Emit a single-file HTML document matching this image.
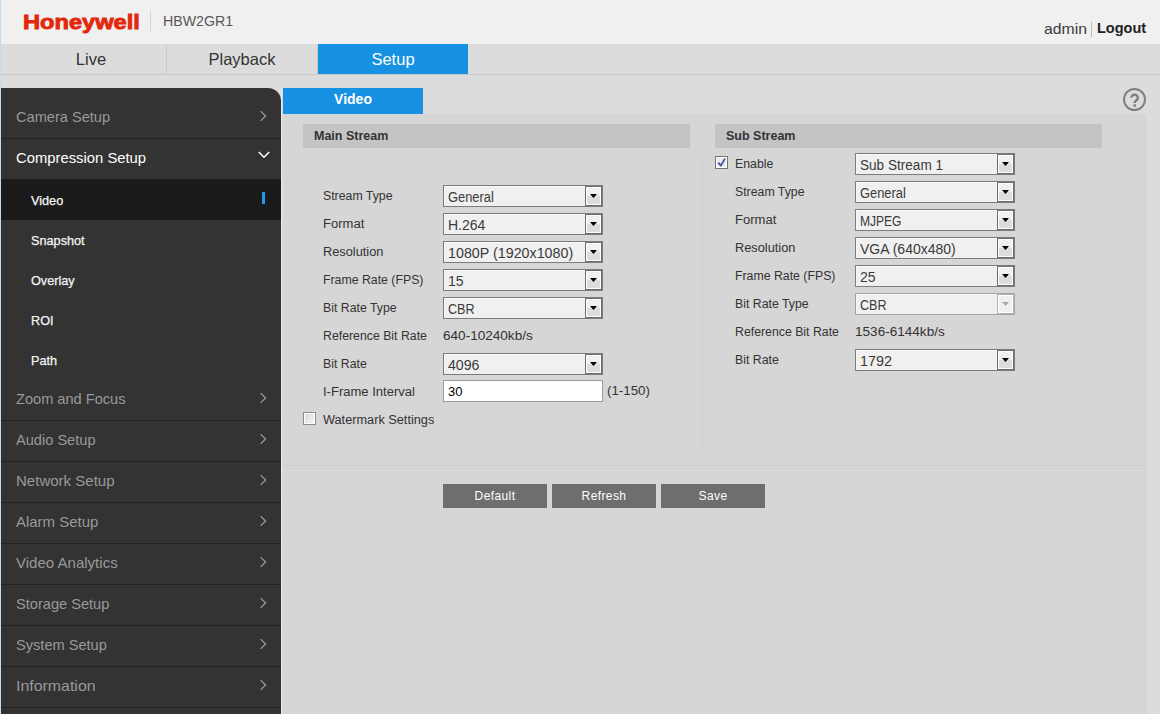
<!DOCTYPE html>
<html><head><meta charset="utf-8">
<style>
*{margin:0;padding:0;box-sizing:border-box}
html,body{width:1160px;height:714px;overflow:hidden;background:#dcdcdc;font-family:"Liberation Sans",sans-serif;position:relative}
.a{position:absolute;white-space:nowrap}
#lb{left:0;top:0;width:1px;height:714px;background:#c2dbf5}
#hdr{left:1px;top:0;width:1159px;height:44px;background:#f0f0f0}
#logo{left:22.5px;top:9.6px;font-size:21px;font-weight:700;color:#e2280c;transform:scaleX(1.125);transform-origin:0 0;-webkit-text-stroke:0.9px #e4280e}
#hsep{left:150px;top:11px;width:1px;height:20px;background:#d4d4d4}
#model{left:163px;top:13px;font-size:14.2px;color:#585858}
#admin{left:1044px;top:19.5px;font-size:15px;color:#3a3a3a;transform:scaleX(1.05);transform-origin:0 0}
#usep{left:1091px;top:22px;width:1px;height:15px;background:#bbb}
#logout{left:1097px;top:19.5px;font-size:14.5px;font-weight:700;color:#222}
#nav{left:1px;top:44px;width:1159px;height:31px;background:#dcdcdc;border-bottom:1px solid #c9c9c9}
.tab{top:44px;height:30px;width:150px;text-align:center;font-size:16.5px;line-height:30px;color:#333}
.tsep{top:44px;width:1px;height:30px;background:#cbcbcb}
#side{left:1px;top:88px;width:280px;height:626px;background:#333;border-top-right-radius:13px;overflow:hidden}
.mi{left:0;width:280px;height:41px;border-bottom:1px solid #222;font-size:14.6px;color:#999;padding-left:15px;line-height:38.5px}
.mi.open{color:#fff;border-bottom:none}
.si{left:0;width:280px;height:40px;font-size:12.7px;font-weight:400;color:#f4f4f4;-webkit-text-stroke:0.25px #f4f4f4;padding-left:30px;line-height:42.5px}
.chev{position:absolute;right:12px;top:12px;width:12px;height:12px}
.open .chev{top:10px;right:11.5px}
#content{left:283px;top:114px;width:863px;height:600px;background:#d6d6d6;border-right:1px solid #d1d1d1}
#vtab{left:283px;top:88px;width:140px;height:26px;background:#1791e2;color:#fff;font-size:14px;font-weight:700;text-align:center;line-height:22px}
.bar{top:124px;height:24px;width:387px;background:#c4c4c4;font-size:12.5px;font-weight:700;color:#333;padding-left:11px;line-height:24px}
.lbl{font-size:12.3px;color:#333}
.sel{position:absolute;width:160px;height:22px;border:1px solid #7d7d7d;background:#f0f0f0;box-shadow:inset 1px 1px 0 #f8f8f8}
.sel span{position:absolute;left:4px;transform-origin:0 0;top:2px;font-size:14px;color:#3a3a3a;line-height:18px;white-space:nowrap}
.sel i{position:absolute;right:0;top:0;width:17px;height:20px;border:1px solid #6c6c6c;background:linear-gradient(#f0f0f0 50%,#dcdcdc 50%);box-shadow:inset 0 0 0 1px #fff}
.sel i svg{position:absolute;left:4px;top:7px}
.sel.dis{border-color:#a3a3a3}
.sel.dis i{border-color:#b5b5b5;background:#f0f0f0}
.btn{top:484px;width:104px;height:24px;background:#6e6e6e;color:#fff;font-size:12px;letter-spacing:0.4px;text-align:center;line-height:24px}
.val{font-size:13.3px;color:#333}
.inp{width:160px;height:22px;border:1px solid #9c9c9c;background:#fff}
.inp span{position:absolute;left:4px;top:3px;font-size:13px;color:#000}
.cb{position:absolute;width:13px;height:13px;border:1px solid #747474;background:#ececec;box-shadow:inset 0 0 0 1px #fff}
</style></head><body>
<div class="a" id="lb"></div>
<div class="a" id="hdr"></div>
<div class="a" id="logo">Honeywell</div>
<div class="a" id="hsep"></div>
<div class="a" id="model">HBW2GR1</div>
<div class="a" id="admin">admin</div>
<div class="a" id="usep"></div>
<div class="a" id="logout">Logout</div>

<div class="a" id="nav"></div>
<div class="a tab" style="left:16px">Live</div>
<div class="a tsep" style="left:166px"></div>
<div class="a tab" style="left:167px">Playback</div>
<div class="a tsep" style="left:317px"></div>
<div class="a tab" style="left:318px;background:#1791e2;color:#fff;height:30px">Setup</div>

<div class="a" id="side">
 <div class="a mi" style="top:10px">Camera Setup<svg class="chev" viewBox="0 0 12 12"><path d="M3.6 1.1 L8.6 6 L3.6 10.9" fill="none" stroke="#999" stroke-width="1.3"/></svg></div>
 <div class="a mi open" style="top:51px"><span style="display:inline-block;transform:scaleX(1.015);transform-origin:0 0">Compression Setup</span><svg class="chev" viewBox="0 0 12 12"><path d="M0.8 3 L6 8.2 L11.2 3" fill="none" stroke="#fff" stroke-width="1.5"/></svg></div>
 <div class="a si" style="top:91px;height:41px;background:#1b1b1b;line-height:44px">Video<div style="position:absolute;left:261px;top:13px;width:3px;height:12px;background:#1e9af0"></div></div>
 <div class="a si" style="top:132px">Snapshot</div>
 <div class="a si" style="top:172px">Overlay</div>
 <div class="a si" style="top:212px">ROI</div>
 <div class="a si" style="top:252px">Path</div>
 <div class="a mi" style="top:292px">Zoom and Focus<svg class="chev" viewBox="0 0 12 12"><path d="M3.6 1.1 L8.6 6 L3.6 10.9" fill="none" stroke="#999" stroke-width="1.3"/></svg></div>
 <div class="a mi" style="top:333px">Audio Setup<svg class="chev" viewBox="0 0 12 12"><path d="M3.6 1.1 L8.6 6 L3.6 10.9" fill="none" stroke="#999" stroke-width="1.3"/></svg></div>
 <div class="a mi" style="top:374px"><span style="display:inline-block;transform:scaleX(1.03);transform-origin:0 0">Network Setup</span><svg class="chev" viewBox="0 0 12 12"><path d="M3.6 1.1 L8.6 6 L3.6 10.9" fill="none" stroke="#999" stroke-width="1.3"/></svg></div>
 <div class="a mi" style="top:415px"><span style="display:inline-block;transform:scaleX(1.025);transform-origin:0 0">Alarm Setup</span><svg class="chev" viewBox="0 0 12 12"><path d="M3.6 1.1 L8.6 6 L3.6 10.9" fill="none" stroke="#999" stroke-width="1.3"/></svg></div>
 <div class="a mi" style="top:456px"><span style="display:inline-block;transform:scaleX(1.03);transform-origin:0 0">Video Analytics</span><svg class="chev" viewBox="0 0 12 12"><path d="M3.6 1.1 L8.6 6 L3.6 10.9" fill="none" stroke="#999" stroke-width="1.3"/></svg></div>
 <div class="a mi" style="top:497px">Storage Setup<svg class="chev" viewBox="0 0 12 12"><path d="M3.6 1.1 L8.6 6 L3.6 10.9" fill="none" stroke="#999" stroke-width="1.3"/></svg></div>
 <div class="a mi" style="top:538px">System Setup<svg class="chev" viewBox="0 0 12 12"><path d="M3.6 1.1 L8.6 6 L3.6 10.9" fill="none" stroke="#999" stroke-width="1.3"/></svg></div>
 <div class="a mi" style="top:579px"><span style="display:inline-block;transform:scaleX(1.09);transform-origin:0 0">Information</span><svg class="chev" viewBox="0 0 12 12"><path d="M3.6 1.1 L8.6 6 L3.6 10.9" fill="none" stroke="#999" stroke-width="1.3"/></svg></div>
</div>
<div class="a" style="left:281px;top:88px;width:1px;height:626px;background:#e8e8e8"></div>

<div class="a" id="content"></div>
<div class="a" id="vtab">Video</div>

<svg class="a" style="left:1122px;top:87px" width="25" height="25" viewBox="0 0 25 25"><circle cx="12.5" cy="12.5" r="10.5" fill="none" stroke="#808080" stroke-width="2"/><path d="M9.4 10.8 A3.2 3.2 0 1 1 15 12.9 Q12.7 14.2 12.7 15.6 V16.1" fill="none" stroke="#808080" stroke-width="2.4"/><rect x="11.4" y="17.3" width="2.6" height="2.4" fill="#808080"/></svg>

<div class="a bar" style="left:303px">Main Stream</div>
<div class="a bar" style="left:715px">Sub Stream</div>

<div id="forms"><!--F-->
<div class="a lbl" style="left:323px;top:188.5px">Stream Type</div>
<div class="sel" style="left:443px;top:185px"><span style="transform:scaleX(0.92)">General</span><i><svg width="7" height="4" viewBox="0 0 7 4"><path d="M0 0H7L3.5 4Z" fill="#000"/></svg></i></div>
<div class="a lbl" style="left:323px;top:216.5px;transform:scaleX(1.06);transform-origin:0 0">Format</div>
<div class="sel" style="left:443px;top:213px"><span>H.264</span><i><svg width="7" height="4" viewBox="0 0 7 4"><path d="M0 0H7L3.5 4Z" fill="#000"/></svg></i></div>
<div class="a lbl" style="left:323px;top:244.5px;transform:scaleX(1.04);transform-origin:0 0">Resolution</div>
<div class="sel" style="left:443px;top:241px"><span style="transform:scaleX(1.02)">1080P (1920x1080)</span><i><svg width="7" height="4" viewBox="0 0 7 4"><path d="M0 0H7L3.5 4Z" fill="#000"/></svg></i></div>
<div class="a lbl" style="left:323px;top:272.5px">Frame Rate (FPS)</div>
<div class="sel" style="left:443px;top:269px"><span>15</span><i><svg width="7" height="4" viewBox="0 0 7 4"><path d="M0 0H7L3.5 4Z" fill="#000"/></svg></i></div>
<div class="a lbl" style="left:323px;top:300.5px">Bit Rate Type</div>
<div class="sel" style="left:443px;top:297px"><span style="transform:scaleX(0.9)">CBR</span><i><svg width="7" height="4" viewBox="0 0 7 4"><path d="M0 0H7L3.5 4Z" fill="#000"/></svg></i></div>
<div class="a lbl" style="left:323px;top:328.5px">Reference Bit Rate</div>
<div class="a val" style="left:443px;top:328px;transform:scaleX(1.02);transform-origin:0 0">640-10240kb/s</div>
<div class="a lbl" style="left:323px;top:356.5px">Bit Rate</div>
<div class="sel" style="left:443px;top:353px"><span style="transform:scaleX(1.01)">4096</span><i><svg width="7" height="4" viewBox="0 0 7 4"><path d="M0 0H7L3.5 4Z" fill="#000"/></svg></i></div>
<div class="a lbl" style="left:323px;top:384.5px;transform:scaleX(1.06);transform-origin:0 0">I-Frame Interval</div>
<div class="a inp" style="left:443px;top:380px"><span>30</span></div>
<div class="a val" style="left:607px;top:382.5px">(1-150)</div>
<div class="cb" style="left:303px;top:412px;border-color:#8c8c8c;background:linear-gradient(135deg,#d8d8d8,#f6f6f6)"></div>
<div class="a lbl" style="left:323px;top:412.5px;transform:scaleX(1.035);transform-origin:0 0">Watermark Settings</div>
<div class="a lbl" style="left:735px;top:156.5px">Enable</div>
<div class="sel" style="left:855px;top:153px"><span style="transform:scaleX(0.97)">Sub Stream 1</span><i><svg width="7" height="4" viewBox="0 0 7 4"><path d="M0 0H7L3.5 4Z" fill="#000"/></svg></i></div>
<div class="a lbl" style="left:735px;top:184.5px">Stream Type</div>
<div class="sel" style="left:855px;top:181px"><span style="transform:scaleX(0.92)">General</span><i><svg width="7" height="4" viewBox="0 0 7 4"><path d="M0 0H7L3.5 4Z" fill="#000"/></svg></i></div>
<div class="a lbl" style="left:735px;top:212.5px;transform:scaleX(1.06);transform-origin:0 0">Format</div>
<div class="sel" style="left:855px;top:209px"><span style="transform:scaleX(0.86)">MJPEG</span><i><svg width="7" height="4" viewBox="0 0 7 4"><path d="M0 0H7L3.5 4Z" fill="#000"/></svg></i></div>
<div class="a lbl" style="left:735px;top:240.5px;transform:scaleX(1.04);transform-origin:0 0">Resolution</div>
<div class="sel" style="left:855px;top:237px"><span>VGA (640x480)</span><i><svg width="7" height="4" viewBox="0 0 7 4"><path d="M0 0H7L3.5 4Z" fill="#000"/></svg></i></div>
<div class="a lbl" style="left:735px;top:268.5px">Frame Rate (FPS)</div>
<div class="sel" style="left:855px;top:265px"><span>25</span><i><svg width="7" height="4" viewBox="0 0 7 4"><path d="M0 0H7L3.5 4Z" fill="#000"/></svg></i></div>
<div class="a lbl" style="left:735px;top:296.5px">Bit Rate Type</div>
<div class="sel dis" style="left:855px;top:293px"><span style="transform:scaleX(0.9)">CBR</span><i><svg width="7" height="4" viewBox="0 0 7 4"><path d="M0 0H7L3.5 4Z" fill="#a8a8a8"/></svg></i></div>
<div class="a lbl" style="left:735px;top:324.5px">Reference Bit Rate</div>
<div class="a val" style="left:855px;top:324px;transform:scaleX(1.02);transform-origin:0 0">1536-6144kb/s</div>
<div class="a lbl" style="left:735px;top:352.5px">Bit Rate</div>
<div class="sel" style="left:855px;top:349px"><span style="transform:scaleX(1.03)">1792</span><i><svg width="7" height="4" viewBox="0 0 7 4"><path d="M0 0H7L3.5 4Z" fill="#000"/></svg></i></div>
<div class="cb" style="left:715px;top:156px"><svg style="position:absolute;left:1px;top:0px" width="11" height="11" viewBox="0 0 11 11"><path d="M1.7 6.1 L3.9 8.6 L7.7 2.1" fill="none" stroke="#3d54a4" stroke-width="1.8" stroke-linecap="round" stroke-linejoin="round"/></svg></div>
<!--/F--></div>

<div class="a" style="left:702px;top:154px;width:1px;height:300px;background:#d0d0d0"></div>
<div class="a" style="left:283px;top:465px;width:863px;height:1px;background:#cdcdcd"></div>

<div class="a btn" style="left:443px">Default</div>
<div class="a btn" style="left:552px">Refresh</div>
<div class="a btn" style="left:661px">Save</div>
</body></html>
